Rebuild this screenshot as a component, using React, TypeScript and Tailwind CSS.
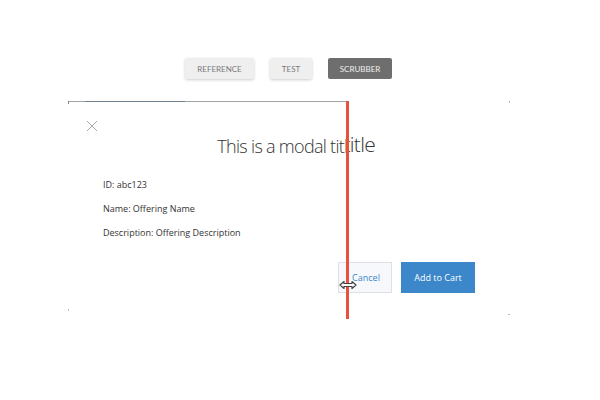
import React from 'react';

interface ModalProps {
  test?: boolean;
}

function Modal({ test }: ModalProps) {
  return (
    <div className="relative w-[442px] h-[218px] bg-white">
      {!test && (
        <div className="absolute left-0 top-0 w-full h-px bg-[#a3a3a3]">
          <div className="absolute left-[17px] top-0 w-[100px] h-px bg-[#6f7f8c]" />
          <div className="absolute left-0 top-0 w-px h-[3px] bg-[#888]" />
        </div>
      )}
      {!test && <div className="absolute left-0 top-[208px] w-px h-[2px] bg-[#bbb]" />}
      {test && <div className="absolute right-0 top-0 w-px h-[2px] bg-[#bbb]" />}
      {test && <div className="absolute right-0 top-[213px] w-[2px] h-px bg-[#bbb]" />}

      {!test && (
        <svg className="absolute left-[18px] top-[19px]" width="12" height="12" viewBox="0 0 12 12">
          <path d="M1 1 L11 11 M11 1 L1 11" stroke="#a6a6a6" strokeWidth="1" fill="none" />
        </svg>
      )}

      <div className={`flex justify-center ${test ? 'pt-[31px] pl-[7px]' : 'pt-[33px] pr-[4px]'}`}>
        <h2
          className={`font-light text-[#333] leading-[24px] ${
            test ? 'text-[21px] tracking-[-0.7px]' : 'text-[18px] tracking-[-0.7px]'
          }`}
        >
          This is a modal title
        </h2>
      </div>

      <div className="pl-[35px] pt-[20px] flex flex-col gap-[11px] text-[9px] leading-[13px] text-[#333]">
        <div>ID: abc123</div>
        <div>Name: Offering Name</div>
        <div>Description: Offering Description</div>
      </div>

      <div className={`flex justify-end gap-[9px] ${test ? 'pt-[25px] pr-[35px]' : 'pt-[23px] pr-[37px]'}`}>
        <button className="w-[52px] h-[31px] bg-[#f7f8fb] border border-[#dde1e6] text-[#3a87c8] text-[9px]">
          Cancel
        </button>
        <button className="w-[74px] h-[31px] bg-[#3b87c9] text-white text-[9px]">Add to Cart</button>
      </div>
    </div>
  );
}

export default function App() {
  return (
    <div className="w-[600px] h-[400px] bg-white" style={{ fontFamily: '"Open Sans", sans-serif' }}>
      <div className="flex gap-4 pl-[185px] pt-[58px]" style={{ fontFamily: 'Lato, sans-serif' }}>
        <button className="w-[69px] h-[21px] bg-[#efefef] text-[#7a7a7a] text-[8px] rounded-[2px] shadow-[0_1px_3px_rgba(0,0,0,0.2)]">
          REFERENCE
        </button>
        <button className="w-[42px] h-[21px] bg-[#efefef] text-[#7a7a7a] text-[8px] rounded-[2px] shadow-[0_1px_3px_rgba(0,0,0,0.2)]">
          TEST
        </button>
        <button className="w-[64px] h-[21px] bg-[#6e6e6e] text-[#eee] text-[8px] rounded-[2px]">SCRUBBER</button>
      </div>

      <div className="relative ml-[68px] mt-[22px] w-[442px] h-[218px]">
        <Modal test />
        <div className="absolute left-0 top-0 h-full w-[279px] overflow-hidden">
          <Modal />
        </div>
        <div className="absolute left-[278px] top-0 w-[3px] h-[218px] bg-[#e9513f]" />
        <svg className="absolute left-[271px] top-[179px]" width="18" height="10" viewBox="0 0 18 10">
          <path
            d="M1 5 L5 1.5 L5 3.5 L13 3.5 L13 1.5 L17 5 L13 8.5 L13 6.5 L5 6.5 L5 8.5 Z"
            fill="#fff"
            stroke="#444"
            strokeWidth="1.2"
            strokeLinejoin="round"
          />
        </svg>
      </div>
    </div>
  );
}
